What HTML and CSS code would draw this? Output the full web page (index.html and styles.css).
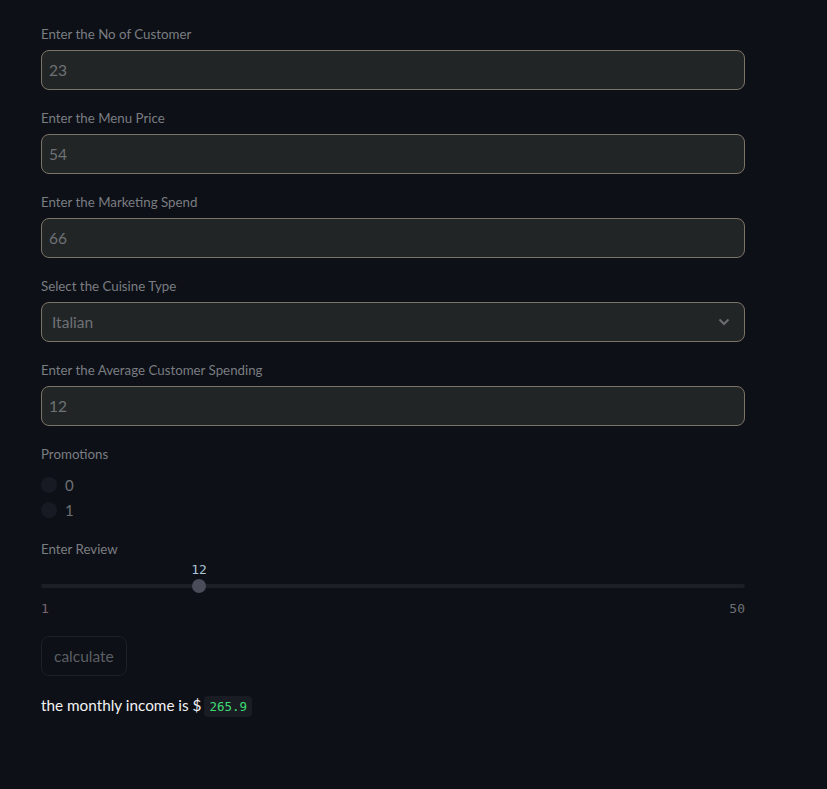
FILE: index.html
```html
<!DOCTYPE html>
<html lang="en">
<head>
<meta charset="utf-8">
<title>Restaurant income</title>
<link rel="stylesheet" href="styles.css">
</head>
<body>
<main class="app">
  <div class="field">
    <label class="label">Enter the No of Customer</label>
    <div class="box"><span class="value">23</span></div>
  </div>
  <div class="field">
    <label class="label">Enter the Menu Price</label>
    <div class="box"><span class="value">54</span></div>
  </div>
  <div class="field">
    <label class="label">Enter the Marketing Spend</label>
    <div class="box"><span class="value">66</span></div>
  </div>
  <div class="field">
    <label class="label">Select the Cuisine Type</label>
    <div class="box select"><span class="value sel">Italian</span>
      <svg class="chev" width="12" height="8" viewBox="0 0 12 8"><path d="M1.5 1.5 L6 6 L10.5 1.5" fill="none" stroke="#6b6d70" stroke-width="2"/></svg>
    </div>
  </div>
  <div class="field">
    <label class="label">Enter the Average Customer Spending</label>
    <div class="box"><span class="value">12</span></div>
  </div>
  <div class="field radios">
    <label class="label">Promotions</label>
    <div class="radio-list">
      <div class="radio"><span class="dot"></span><span class="rtext">0</span></div>
      <div class="radio"><span class="dot"></span><span class="rtext">1</span></div>
    </div>
  </div>
  <div class="field slider-field">
    <label class="label">Enter Review</label>
    <div class="slider">
      <div class="track"></div>
      <div class="thumb" style="left: 22.45%"><span class="thumb-val">12</span></div>
    </div>
    <div class="ticks"><span class="tick-min">1</span><span class="tick-max">50</span></div>
  </div>
  <div class="btn-row"><button class="btn" disabled>calculate</button></div>
  <p class="result">the monthly income is $ <code class="code">265.9</code></p>
</main>
</body>
</html>
```
FILE: styles.css
```css
* { box-sizing: border-box; }
html, body { margin: 0; padding: 0; background: #0d1016; }
body { font-family: "Lato", "Noto Sans", sans-serif; }
.app {
  width: 827px;
  padding: 24px 0 0 41px;
  display: flex;
  flex-direction: column;
  gap: 18px;
}
.field { width: 704px; display: flex; flex-direction: column; }
.label {
  font-size: 13.3px;
  line-height: 21px;
  height: 21px;
  color: #7a7d82;
  margin-bottom: 5px;
}
.box {
  height: 40px;
  border: 1px solid #7b7366;
  border-radius: 8px;
  background: #222526;
  display: flex;
  align-items: center;
  padding: 0 7px;
}
.value { font-size: 15.5px; color: #6e7175; }
.select { justify-content: space-between; padding: 0 14px 0 10px; }
.chev { display: block; }
.radios .label { margin-bottom: 7px; }
.radio-list { display: flex; flex-direction: column; }
.radio { height: 25px; display: flex; align-items: center; gap: 8px; }
.dot { width: 16px; height: 16px; border-radius: 50%; background: #171a22; }
.rtext { font-size: 15px; color: #6e7175; }
.slider-field { gap: 0; margin-top: -1px; }
.slider-field .label { margin-bottom: 0; }
.slider { position: relative; height: 40px; }
.track {
  position: absolute; left: 0; right: 0; top: 24px; height: 4px;
  border-radius: 2px; background: #1c1f26;
}
.thumb {
  position: absolute; top: 19px; width: 14px; height: 14px; margin-left: -7px;
  border-radius: 50%; background: #4a4c5a;
}
.thumb-val {
  position: absolute; bottom: 16px; left: 50%; transform: translateX(-50%);
  font-family: "DejaVu Sans Mono", monospace; font-size: 13px; color: #a9c4d6;
  white-space: nowrap; line-height: 14px;
}
.ticks {
  display: flex; justify-content: space-between;
  font-family: "DejaVu Sans Mono", monospace; font-size: 13px; line-height: 16px;
  margin-top: 1px; margin-bottom: -1px;
}
.tick-min { color: #7c6472; }
.tick-max { color: #6d7074; }
.btn-row { margin-top: 2px; }
.btn {
  height: 40px; padding: 0 12px;
  background: transparent; border: 1px solid #1d2027; border-radius: 8px;
  font-family: "Lato", "Noto Sans", sans-serif; font-size: 15.5px; color: #5c5f64;
}
.result {
  margin: 0; margin-top: -1px;
  font-size: 15.3px; color: #f2f2f2; line-height: 24px;
}
.code {
  font-family: "DejaVu Sans Mono", monospace; font-size: 12.5px; color: #3ddc73;
  background: #1a1c23; border-radius: 4px; padding: 3px 5px; margin-left: -1px;
}
```
